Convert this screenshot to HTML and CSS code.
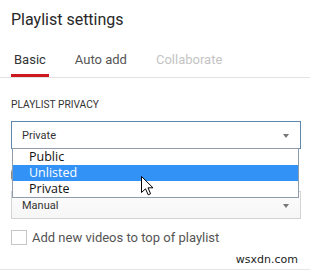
FILE: index.html
```html
<!DOCTYPE html>
<html lang="en">
<head>
    <meta charset="UTF-8">
    <meta name="viewport" content="width=device-width, initial-scale=1.0">
    <title>Playlist settings</title>
    <link rel="stylesheet" href="styles.css">
</head>
<body>
    <div class="painel">
        <h1 class="titulo">Playlist settings</h1>
        <div class="abas">
            <span class="aba ativa">Basic</span>
            <span class="aba">Auto add</span>
            <span class="aba desativada">Collaborate</span>
        </div>

        <div class="campo">
            <label class="rotulo">PLAYLIST PRIVACY</label>
            <div class="caixa-select focada">
                <span>Private</span>
                <span class="seta"></span>
                <ul class="lista-opcoes">
                    <li>Public</li>
                    <li class="marcada">Unlisted</li>
                    <li>Private</li>
                </ul>
                <svg class="cursor" width="13" height="20" viewBox="0 0 13 20">
                    <path d="M0.5 0.5 L0.5 16.5 L4.5 12.8 L7.2 18.8 L9.6 17.8 L7 11.8 L12 11.8 Z" fill="#fff" stroke="#000" stroke-width="1" stroke-linejoin="miter"/>
                </svg>
            </div>
        </div>

        <div class="campo segundo">
            <!-- rotulo escondido atras da lista aberta -->
            <div class="rotulo vazio"></div>
            <div class="caixa-select">
                <span>Manual</span>
                <span class="seta"></span>
            </div>
        </div>

        <label class="linha-check">
            <span class="quadrado"></span>
            <span>Add new videos to top of playlist</span>
        </label>

        <div class="marca">wsxdn.com</div>
    </div>
</body>
</html>
```

FILE: styles.css
```css
* {
    margin: 0;
    padding: 0;
    box-sizing: border-box;
}
body {
    background-color: #fff;
    font-family: Roboto, "Liberation Sans", sans-serif;
    color: #333;
}
.painel {
    width: 310px;
    height: 271px;
    padding-top: 10px;
    overflow: hidden;
}
.titulo {
    font-size: 16px;
    font-weight: normal;
    line-height: 20px;
    color: #282828;
    padding-left: 11px;
}
.abas {
    display: flex;
    gap: 23px;
    margin-top: 22px;
    padding-left: 11px;
    border-bottom: 1px solid #e2e2e2;
}
.aba {
    font-size: 13px;
    line-height: 16px;
    padding: 0 3px 6px 3px;
    border-bottom: 3px solid transparent;
    color: #555;
}
.aba.ativa {
    color: #333;
    border-bottom-color: #cc181e;
}
.aba.desativada {
    color: #c4c4c4;
}
.campo {
    margin-top: 21px;
    padding: 0 9px 0 11px;
}
.campo.segundo {
    margin-top: 20px;
}
.rotulo {
    display: block;
    font-size: 10.2px;
    line-height: 12px;
    color: #333;
    margin-bottom: 10px;
}
.rotulo.vazio {
    height: 12px;
    border-left: 1px solid #888;
    border-top: 3px solid transparent;
    border-bottom: 3px solid transparent;
    background-clip: padding-box;
    width: 2px;
}
.caixa-select {
    position: relative;
    display: flex;
    align-items: center;
    justify-content: space-between;
    height: 28px;
    padding: 0 10px 0 10px;
    border: 1px solid #d3d3d3;
    background: linear-gradient(to bottom, #fcfcfc, #f6f6f6);
    font-size: 11px;
    line-height: 13px;
    color: #333;
}
.caixa-select.focada {
    border-color: #5f86ad;
    background: #fff;
}
.seta {
    width: 0;
    height: 0;
    margin-right: 1px;
    margin-top: 2px;
    border-left: 3.5px solid transparent;
    border-right: 3.5px solid transparent;
    border-top: 4px solid #777;
}
.lista-opcoes {
    position: absolute;
    top: 100%;
    left: 0;
    right: 1px;
    list-style: none;
    background: #fff;
    border: 1px solid #8e9cab;
    z-index: 2;
}
.lista-opcoes li {
    height: 16px;
    line-height: 16px;
    padding-left: 16px;
    font-family: "Open Sans", "Noto Sans", sans-serif;
    font-size: 12.5px;
    color: #111;
}
.lista-opcoes li.marcada {
    background-color: #3392f6;
    color: #fff;
}
.cursor {
    position: absolute;
    left: 129px;
    top: 54px;
    z-index: 3;
}
.linha-check {
    display: flex;
    align-items: center;
    gap: 5px;
    margin-top: 11px;
    padding-left: 11px;
    height: 15px;
    font-size: 13px;
    line-height: 15px;
    color: #555;
}
.quadrado {
    width: 16px;
    height: 15px;
    border: 1px solid #c6c6c6;
    background: #fff;
}
.marca {
    margin-top: 8px;
    padding: 0 12px 3px 0;
    text-align: right;
    font-family: "DejaVu Sans", sans-serif;
    font-size: 11px;
    line-height: 13px;
    color: #222;
    border-bottom: 1px solid #e6e6e6;
}
```
